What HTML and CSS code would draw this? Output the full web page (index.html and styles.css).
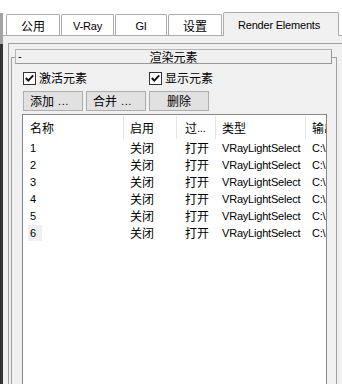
FILE: index.html
```html
<!DOCTYPE html>
<html>
<head>
<meta charset="utf-8">
<link rel="stylesheet" href="styles.css">
</head>
<body>
<div class="strip"></div>
<div class="main">
  <div class="tabs">
    <div class="tab t1">公用</div>
    <div class="tab t2"><span class="l">V-Ray</span></div>
    <div class="tab t3"><span class="l">GI</span></div>
    <div class="tab t4">设置</div>
    <div class="tab t5 sel"><span class="l">Render Elements</span></div>
  </div>
  <div class="panel">
    <div class="frame">
      <div class="group">
        <div class="bar">
          <span class="minus l">-</span>
          <span class="title">渲染元素</span>
          <span></span>
        </div>
        <div class="checks">
          <div class="chk">
            <span class="box"><svg width="11" height="11" viewBox="0 0 11 11"><path d="M1.8 5 L4.3 7.6 L9.2 2.4" fill="none" stroke="#111" stroke-width="2"/></svg></span>
            <span>激活元素</span>
          </div>
          <div class="chk">
            <span class="box"><svg width="11" height="11" viewBox="0 0 11 11"><path d="M1.8 5 L4.3 7.6 L9.2 2.4" fill="none" stroke="#111" stroke-width="2"/></svg></span>
            <span>显示元素</span>
          </div>
        </div>
        <div class="buttons">
          <div class="btn b1"><span>添加</span><span class="l dots">...</span></div>
          <div class="btn b2"><span>合并</span><span class="l dots">...</span></div>
          <div class="btn b3">删除</div>
        </div>
        <div class="list">
          <div class="row head">
            <div class="c c1">名称</div>
            <div class="c c2">启用</div>
            <div class="c c3">过<span class="l">...</span></div>
            <div class="c c4">类型</div>
            <div class="c c5">输出</div>
          </div>
          <div class="row"><div class="c c1"><span class="l">1</span></div><div class="c c2">关闭</div><div class="c c3">打开</div><div class="c c4"><span class="l">VRayLightSelect</span></div><div class="c c5"><span class="l">C:\</span></div></div>
          <div class="row"><div class="c c1"><span class="l">2</span></div><div class="c c2">关闭</div><div class="c c3">打开</div><div class="c c4"><span class="l">VRayLightSelect</span></div><div class="c c5"><span class="l">C:\</span></div></div>
          <div class="row"><div class="c c1"><span class="l">3</span></div><div class="c c2">关闭</div><div class="c c3">打开</div><div class="c c4"><span class="l">VRayLightSelect</span></div><div class="c c5"><span class="l">C:\</span></div></div>
          <div class="row"><div class="c c1"><span class="l">4</span></div><div class="c c2">关闭</div><div class="c c3">打开</div><div class="c c4"><span class="l">VRayLightSelect</span></div><div class="c c5"><span class="l">C:\</span></div></div>
          <div class="row"><div class="c c1"><span class="l">5</span></div><div class="c c2">关闭</div><div class="c c3">打开</div><div class="c c4"><span class="l">VRayLightSelect</span></div><div class="c c5"><span class="l">C:\</span></div></div>
          <div class="row"><div class="c c1"><span class="l focus">6</span></div><div class="c c2">关闭</div><div class="c c3">打开</div><div class="c c4"><span class="l">VRayLightSelect</span></div><div class="c c5"><span class="l">C:\</span></div></div>
        </div>
      </div>
    </div>
  </div>
</div>
</body>
</html>
```

FILE: styles.css
```css
* { box-sizing: border-box; }
html, body { margin: 0; padding: 0; }
body {
  width: 342px;
  height: 384px;
  overflow: hidden;
  background: #fff;
  display: flex;
  font-family: "Noto Sans CJK SC", sans-serif;
  font-size: 12px;
  line-height: 14px;
  color: #000;
}
.l {
  font-family: "Liberation Sans", sans-serif;
  font-size: 11px;
  letter-spacing: -0.2px;
}
.strip {
  width: 3px;
  flex: none;
  background: linear-gradient(to bottom, #fff 0 13px, #a3a3a3 13px 44px, #333 44px);
}
.main {
  flex: 1;
  min-width: 0;
  display: flex;
  flex-direction: column;
}
.tabs {
  height: 35px;
  flex: none;
  display: flex;
  align-items: flex-end;
  padding-left: 3px;
  background: #fff;
}
.tab {
  height: 21px;
  border: 1px solid #acacac;
  border-bottom: none;
  border-radius: 2px 2px 0 0;
  background: #fff;
  display: flex;
  align-items: center;
  justify-content: center;
  margin-right: 1px;
  padding-top: 1px;
}
.t1 { width: 54px; }
.t2 { width: 53px; }
.t3 { width: 52px; }
.t4 { width: 54px; }
.t5 { width: 116px; }
.tab.sel {
  height: 24px;
  background: #f0f0f0;
  margin-bottom: -1px;
  position: relative;
  z-index: 1;
  padding-top: 0;
  padding-right: 4px;
}
.panel {
  flex: 1;
  background: #f0f0f0;
  border-top: 1px solid #acacac;
  padding: 7px 0 0 5px;
  display: flex;
  flex-direction: column;
  min-height: 0;
}
.frame {
  flex: 1;
  border-left: 1px solid #a0a0a0;
  border-top: 1px solid #a0a0a0;
  padding-left: 2px;
  display: flex;
  flex-direction: column;
  min-height: 0;
}
.group {
  flex: 1;
  margin: 13px 5px 0 0;
  border-left: 1px solid #a0a0a0;
  border-top: 1px solid #a0a0a0;
  border-right: 1px solid #a0a0a0;
  display: flex;
  flex-direction: column;
  min-height: 0;
}
.bar {
  margin: -9px 4px 0 3px;
  height: 15px;
  border: 1px solid;
  border-color: #b4b4b4 #9a9a9a #9a9a9a #b4b4b4;
  background: #f0f0f0;
  display: grid;
  grid-template-columns: 1fr auto 1fr;
  align-items: center;
  line-height: 13px;
}
.minus { padding-left: 2px; }
.checks {
  display: flex;
  align-items: center;
  height: 14px;
  margin: 7px 0 0 11px;
}
.chk {
  display: flex;
  align-items: center;
  gap: 3px;
  width: 126px;
}
.box {
  width: 13px;
  height: 13px;
  border: 1px solid #333;
  background: #fff;
  display: flex;
  align-items: center;
  justify-content: center;
}
.box svg { display: block; }
.buttons {
  display: flex;
  gap: 3px;
  margin: 6px 0 0 11px;
}
.btn {
  width: 60px;
  height: 20px;
  background: #e1e1e1;
  border: 1px solid #adadad;
  display: flex;
  align-items: center;
  justify-content: center;
}
.dots { margin-left: 4px; letter-spacing: 0.6px; }
.b1, .b2 { padding-right: 7px; }
.list {
  flex: 1;
  margin: 3px 9px 0 10px;
  border: 1px solid #828790;
  border-bottom: none;
  background: #fff;
  min-height: 0;
}
.row {
  display: grid;
  grid-template-columns: 101px 53px 39px 90px 1fr;
  height: 17px;
}
.row.head { height: 24px; padding-top: 1px; }
.c {
  display: flex;
  align-items: center;
  white-space: nowrap;
  overflow: hidden;
  padding-left: 6px;
}
.head .c { border-right: 1px solid #e5e5e5; }
.head .c5 { border-right: none; }
.c1 { padding-left: 7px; }
.c3 { padding-left: 8px; }
.focus {
  display: inline-block;
  background: #efefef;
  margin-left: -2px;
  padding: 1px 6px 1px 2px;
}
```
